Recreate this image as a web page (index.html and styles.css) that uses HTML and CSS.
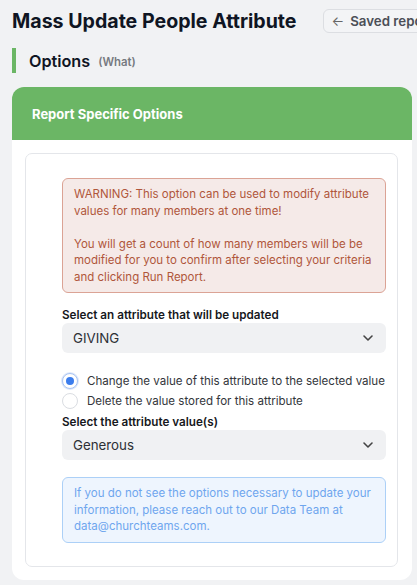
FILE: index.html
```html
<!DOCTYPE html>
<html>
<head>
<meta charset="utf-8">
<link rel="stylesheet" href="styles.css">
</head>
<body>
<div class="page">
  <div class="topbar">
    <h1 class="title">Mass Update People Attribute</h1>
    <button class="back-btn"><span class="arrow">&larr;</span> Saved reports</button>
  </div>
  <div class="section-head">
    <span class="bar"></span>
    <h2 class="section-title">Options</h2>
    <span class="section-sub">(What)</span>
  </div>
  <div class="card">
    <div class="card-header">Report Specific Options</div>
    <div class="card-body">
      <div class="inner">
        <div class="alert alert-warn">WARNING: This option can be used to modify attribute values for many members at one time!<br><br>You will get a count of how many members will be be modified for you to confirm after selecting your criteria and clicking Run Report.</div>
        <div class="field">
          <label class="label">Select an attribute that will be updated</label>
          <div class="select"><span>GIVING</span>
            <svg class="chev" width="12" height="8" viewBox="0 0 12 8"><path d="M2 2 L6 6 L10 2" fill="none" stroke="#444" stroke-width="1.6" stroke-linecap="round" stroke-linejoin="round"/></svg>
          </div>
        </div>
        <div class="radios">
          <div class="radio-row"><span class="radio checked"></span><span class="radio-text">Change the value of this attribute to the selected value</span></div>
          <div class="radio-row"><span class="radio"></span><span class="radio-text">Delete the value stored for this attribute</span></div>
        </div>
        <div class="field">
          <label class="label">Select the attribute value(s)</label>
          <div class="select"><span>Generous</span>
            <svg class="chev" width="12" height="8" viewBox="0 0 12 8"><path d="M2 2 L6 6 L10 2" fill="none" stroke="#444" stroke-width="1.6" stroke-linecap="round" stroke-linejoin="round"/></svg>
          </div>
        </div>
        <div class="alert alert-info">If you do not see the options necessary to update your information, please reach out to our Data Team at data@churchteams.com.</div>
      </div>
    </div>
  </div>
</div>
</body>
</html>
```

FILE: styles.css
```css
* { box-sizing: border-box; }
html, body { margin: 0; padding: 0; }
body {
  background: #f1f2f4;
  font-family: Inter, "Noto Sans", sans-serif;
  color: #111;
  overflow: hidden;
  width: 417px;
}
.page { padding: 0 5px 0 12px; }
.topbar {
  display: flex;
  align-items: center;
  gap: 26px;
  height: 42px;
  white-space: nowrap;
}
.title {
  margin: 0;
  font-size: 19.6px;
  font-weight: 700;
  color: #0f1523;
  flex-shrink: 0;
}
.back-btn {
  flex-shrink: 0;
  height: 24px;
  padding: 0 10px 0 8px;
  border: 1px solid #dcdee2;
  border-radius: 6px;
  background: #f3f4f6;
  font-family: inherit;
  font-size: 13.3px;
  font-weight: 600;
  color: #4b4f57;
  display: flex;
  align-items: center;
  gap: 6px;
}
.back-btn .arrow { font-weight: 400; color: #666; }
.section-head {
  display: flex;
  align-items: center;
  height: 25px;
  margin-top: 6px;
}
.bar {
  width: 4px;
  height: 25px;
  background: #6bb665;
  margin-right: 13px;
}
.section-title {
  margin: 0;
  font-size: 16.2px;
  font-weight: 600;
  color: #0f1523;
}
.section-sub {
  font-size: 11.4px;
  font-weight: 600;
  color: #777a80;
  margin-left: 8px;
  margin-top: 3px;
}
.card {
  margin-top: 14px;
  background: #fff;
  border-radius: 12px;
  overflow: hidden;
}
.card-header {
  background: #6bb665;
  color: #fff;
  font-size: 13px;
  font-weight: 700;
  height: 53px;
  padding: 19px 20px 0;
}
.card-body { padding: 13px 14px 13px 13px; }
.inner {
  border: 1px solid #e4e6ea;
  border-radius: 7px;
  padding: 24px 11px 23px 36px;
}
.alert {
  border: 1px solid;
  border-radius: 6px;
  font-size: 11.5px;
  line-height: 16.5px;
  padding: 7px 10px 7px 11px;
}
.alert-warn {
  background: #f5eae8;
  border-color: #dba395;
  color: #b0563b;
}
.alert-info {
  background: #eef5fe;
  border-color: #acd0f7;
  color: #6ea6ee;
  margin-top: 17px;
}
.field { margin-top: 14px; }
.label {
  display: block;
  font-size: 11.7px;
  font-weight: 600;
  color: #16181c;
  line-height: 16px;
}
.select {
  height: 30px;
  background: #f0f1f3;
  border-radius: 6px;
  display: flex;
  align-items: center;
  justify-content: space-between;
  padding: 0 12px 0 11px;
  font-size: 13.3px;
  color: #2c2f35;
}
.chev { display: block; }
.radios { margin-top: 20px; display: flex; flex-direction: column; gap: 4px; }
.radio-row { display: flex; align-items: center; gap: 9px; height: 16px; }
.radio {
  width: 16px; height: 16px;
  border-radius: 50%;
  border: 1px solid #dadde2;
  background: #fff;
  flex-shrink: 0;
  position: relative;
}
.radio.checked {
  border-color: #a9c4f2;
  box-shadow: 0 0 0 1px #dfe9fb;
}
.radio.checked::after {
  content: "";
  position: absolute;
  left: 3px; top: 3px;
  width: 8px; height: 8px;
  border-radius: 50%;
  background: #3b7ded;
}
.radio-text { font-size: 11.55px; color: #33363b; white-space: nowrap; }
.radios + .field { margin-top: 5px; }
```
